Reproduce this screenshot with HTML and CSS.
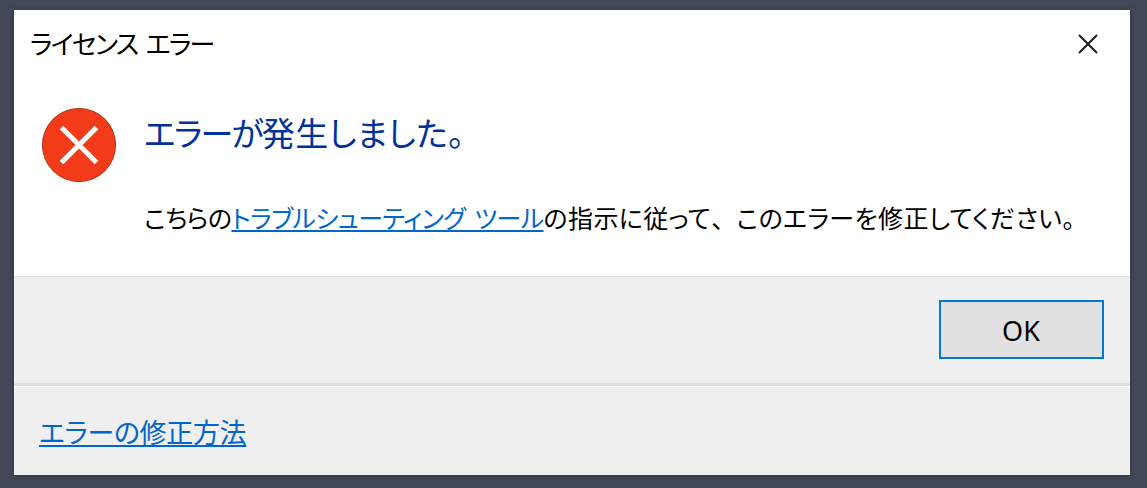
FILE: index.html
```html
<!DOCTYPE html>
<html lang="ja">
<head>
<meta charset="utf-8">
<title>ライセンス エラー</title>
<link rel="stylesheet" href="styles.css">
</head>
<body>
<div class="dialog">
  <div class="top">
    <div class="titlebar">
      <span class="title">ライセンス エラー</span>
      <svg class="close" width="20" height="20" viewBox="0 0 20 20"><path d="M1 1 L19 19 M19 1 L1 19" stroke="#1a1a1a" stroke-width="2" fill="none"/></svg>
    </div>
    <div class="main">
      <svg class="erricon" width="76" height="76" viewBox="0 0 76 76">
        <circle cx="38" cy="38" r="36.6" fill="#f33b19" stroke="#a8371f" stroke-width="1"/>
        <path d="M20.5 20.5 L55.5 55.5 M55.5 20.5 L20.5 55.5" stroke="#fff" stroke-width="5" fill="none"/>
      </svg>
      <div class="msg">
        <h1 class="heading"><span class="tight">エラーが</span>発生しました。</h1>
        <p class="detail">こちらの<a class="link linkspaced" href="#">トラブルシューティング ツール</a><span class="rest">の指示に従って<span class="fullpunct">、</span>このエラーを修正してください。</span></p>
      </div>
    </div>
  </div>
  <div class="actions">
    <button class="ok">OK</button>
  </div>
  <div class="footer">
    <a class="link" href="#">エラーの修正方法</a>
  </div>
</div>
</body>
</html>
```
FILE: styles.css
```css
* { box-sizing: border-box; }
html, body { height: 100%; }
body {
  margin: 0;
  padding: 10px 17px 13px 14px;
  background: #434959;
  font-family: "Noto Sans CJK JP", "Noto Sans", sans-serif;
  font-feature-settings: "palt";
  color: #000;
  overflow: hidden;
}
.dialog {
  width: 1116px;
  height: 465px;
  display: flex;
  flex-direction: column;
  background: #efefef;
  box-shadow: 0 0 5px 1px #33363f;
}
.top {
  height: 267px;
  background: #fff;
  border-bottom: 1px solid #e0e0e0;
}
.titlebar {
  height: 68px;
  padding: 0 32px 4px 16px;
  display: flex;
  align-items: center;
  justify-content: space-between;
}
.title { font-size: 26px; letter-spacing: -1.7px; word-spacing: 4px; }
.close { display: block; margin-top: 3px; }
.main {
  display: flex;
  padding: 29px 0 0 27px;
  gap: 27px;
}
.erricon { display: block; flex: none; }
.msg { min-width: 0; }
.heading {
  margin: 1px 0 0;
  font-size: 33px;
  font-weight: 400;
  line-height: 48px;
  color: #003399;
  letter-spacing: 0.4px;
}
.tight { letter-spacing: -1.8px; }
.detail {
  margin: 41px 0 0;
  font-size: 25px;
  font-weight: 400;
  line-height: 40px;
  letter-spacing: -0.5px;
  white-space: nowrap;
}
.rest { letter-spacing: 0.4px; }
.fullpunct { font-feature-settings: normal; }
.link { color: #0066cc; text-decoration: underline; letter-spacing: -0.33px; }
.linkspaced { letter-spacing: -0.6px; word-spacing: 4px; }
.actions {
  height: 109px;
  padding: 23px 26px 0 0;
  display: flex;
  justify-content: flex-end;
  align-items: flex-start;
  border-bottom: 3px solid #e0e0e0;
}
.ok {
  width: 165px;
  height: 59px;
  background: #e1e1e1;
  border: 2px solid #0078d7;
  font: 400 27px "Noto Sans", "Noto Sans CJK JP", sans-serif;
  color: #000;
  padding: 2px 1px 0 0;
}
.footer {
  flex: 1;
  border-top: 1px solid #fff;
  padding: 25px 0 0 25px;
  font-size: 27px;
  font-weight: 400;
  line-height: 40px;
}
```
